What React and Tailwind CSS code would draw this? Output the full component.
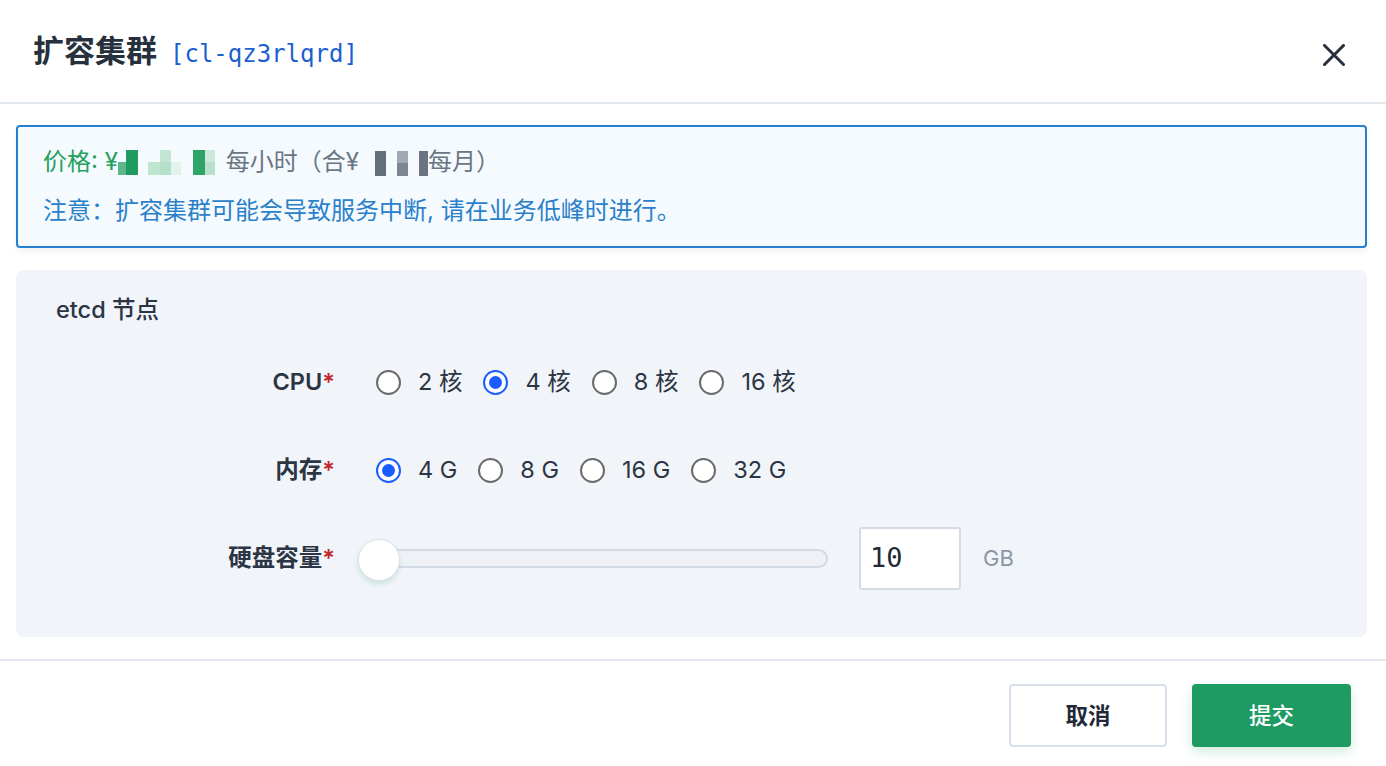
import React from 'react';

const greenCols = [
  { w: 8, top: null, bottom: '#5cb88a', ml: 0 },
  { w: 12, top: '#1f9b60', bottom: '#1f9b60', ml: 0 },
  { w: 12, top: null, bottom: '#bfe4d0', ml: 10 },
  { w: 11, top: '#c2e6d3', bottom: '#b5e0ca', ml: 0 },
  { w: 10, top: null, bottom: '#e1f3ea', ml: 0 },
  { w: 12, top: '#2ea468', bottom: '#2ea468', ml: 12 },
  { w: 10, top: '#cde9db', bottom: '#b8e0cc', ml: 0 },
];

const grayCols = [
  { w: 11, top: '#646f7c', bottom: '#646f7c', ml: 0 },
  { w: 11, top: '#a1a9b2', bottom: '#7c8792', ml: 11 },
  { w: 9, top: '#6b7582', bottom: '#6b7582', ml: 11 },
];

// 打码的价格块
function Mosaic({ cols }) {
  return (
    <span className="inline-flex h-[25px] align-middle">
      {cols.map((c, i) => (
        <span key={i} className="flex flex-col" style={{ width: c.w, marginLeft: c.ml }}>
          <span className="h-[12px]" style={{ background: c.top || 'transparent' }} />
          <span className="h-[13px]" style={{ background: c.bottom || 'transparent' }} />
        </span>
      ))}
    </span>
  );
}

function Radio({ checked, label }) {
  return (
    <label className="flex items-center mr-[21px]">
      {checked ? (
        <span className="w-[25px] h-[25px] rounded-full border-[2.5px] border-[#1b5cff] bg-white flex items-center justify-center">
          <span className="w-[13px] h-[13px] rounded-full bg-[#1b5cff]" />
        </span>
      ) : (
        <span className="w-[25px] h-[25px] rounded-full border-2 border-[#6b6b6b] bg-white" />
      )}
      <span className="ml-[17px] text-[#2b3544] whitespace-pre">{label}</span>
    </label>
  );
}

function Row({ label, children, gap = 'ml-[41px]' }) {
  return (
    <div className="h-[64px] flex items-center">
      <div className="w-[279px] text-right font-semibold text-[#2b3544]">
        {label}
        <span className="text-[#c0262d]">*</span>
      </div>
      <div className={`flex items-center ${gap}`}>{children}</div>
    </div>
  );
}

export default function App() {
  const cpus = ['2 核', '4 核', '8 核', '16 核'];
  const mems = ['4 G', '8 G', '16 G', '32 G'];

  return (
    <div className="w-[1386px] h-[766px] bg-white font-['Inter','Noto_Sans_CJK_SC',sans-serif] text-[23.5px] overflow-hidden">
      {/* 标题栏 */}
      <header className="h-[104px] flex items-center justify-between pl-[33px] pr-[41px] border-b-2 border-[#e3e8ef]">
        <div className="flex items-baseline">
          <h1 className="text-[31px] font-semibold text-[#27303d]">扩容集群</h1>
          <span className="ml-[13px] text-[24px] text-[#1b5fd1] font-['DejaVu_Sans_Mono',monospace]">[cl-qz3rlqrd]</span>
        </div>
        <button className="mt-[8px] w-[22px] h-[22px]">
          <svg width="22" height="22" viewBox="0 0 22 22">
            <path d="M1.5 1.5 L20.5 20.5 M20.5 1.5 L1.5 20.5" stroke="#27303d" strokeWidth="3" strokeLinecap="square" />
          </svg>
        </button>
      </header>

      <main className="pl-[16px] pr-[19px] pt-[21px]">
        {/* 提示 */}
        <div className="h-[123px] border-2 border-[#2680d0] rounded-[4px] bg-[#f5faff] shadow-[0_3px_6px_rgba(0,0,0,0.06)] pl-[25px] flex flex-col justify-center gap-[17px] text-[24px]">
          <p className="leading-[32px] flex items-center">
            <span className="text-[#24a15c]">价格: ¥</span>
            <Mosaic cols={greenCols} />
            <span className="ml-[11px] text-[#6b7684]">每小时（合¥</span>
            <span className="ml-[16px]"><Mosaic cols={grayCols} /></span>
            <span className="text-[#6b7684]">每月）</span>
          </p>
          <p className="leading-[32px] text-[#2a80c9]">注意：扩容集群可能会导致服务中断, 请在业务低峰时进行。</p>
        </div>

        {/* etcd 节点 */}
        <section className="mt-[22px] h-[367px] rounded-lg bg-[#f1f4f9] pt-[25px] px-[40px]">
          <h2 className="h-[30px] leading-[30px] font-medium text-[#2b3544]">etcd 节点</h2>
          <div className="mt-[25px] flex flex-col gap-[24px]">
            <Row label="CPU">
              {cpus.map((c, i) => (
                <Radio key={c} label={c} checked={i === 1} />
              ))}
            </Row>
            <Row label="内存">
              {mems.map((m, i) => (
                <Radio key={m} label={m} checked={i === 0} />
              ))}
            </Row>
            <Row label="硬盘容量" gap="ml-[23px]">
              <div className="relative w-[470px] h-[42px] flex items-center">
                <div className="w-full h-[19px] rounded-full border-2 border-[#d3dbe5] bg-[#eef2f7]" />
                <div className="absolute left-0 top-[2px] w-[42px] h-[42px] rounded-full bg-white border border-[#dbe2ea] shadow-[0_3px_5px_rgba(30,155,99,0.18)]" />
              </div>
              <div className="ml-[31px] w-[102px] h-[63px] border-2 border-[#d3dbe5] rounded-[3px] bg-white flex items-center pl-[9px] font-['DejaVu_Sans_Mono',monospace] text-[27px] text-[#1f2937]">
                10
              </div>
              <span className="ml-[22px] text-[22px] text-[#8a96a3]">GB</span>
            </Row>
          </div>
        </section>
      </main>

      {/* 底部按钮 */}
      <footer className="mt-[22px] border-t-2 border-[#e3e8ef] pt-[23px] pr-[35px] flex justify-end gap-[25px]">
        <button className="w-[158px] h-[63px] rounded-[4px] border-2 border-[#d8e0ea] bg-white font-semibold text-[#1f2937] text-[22.5px]">
          取消
        </button>
        <button className="w-[159px] h-[63px] rounded-[4px] bg-[#1e9b63] text-white font-medium text-[22.5px] shadow-[0_5px_12px_rgba(30,155,99,0.2)]">
          提交
        </button>
      </footer>
    </div>
  );
}
